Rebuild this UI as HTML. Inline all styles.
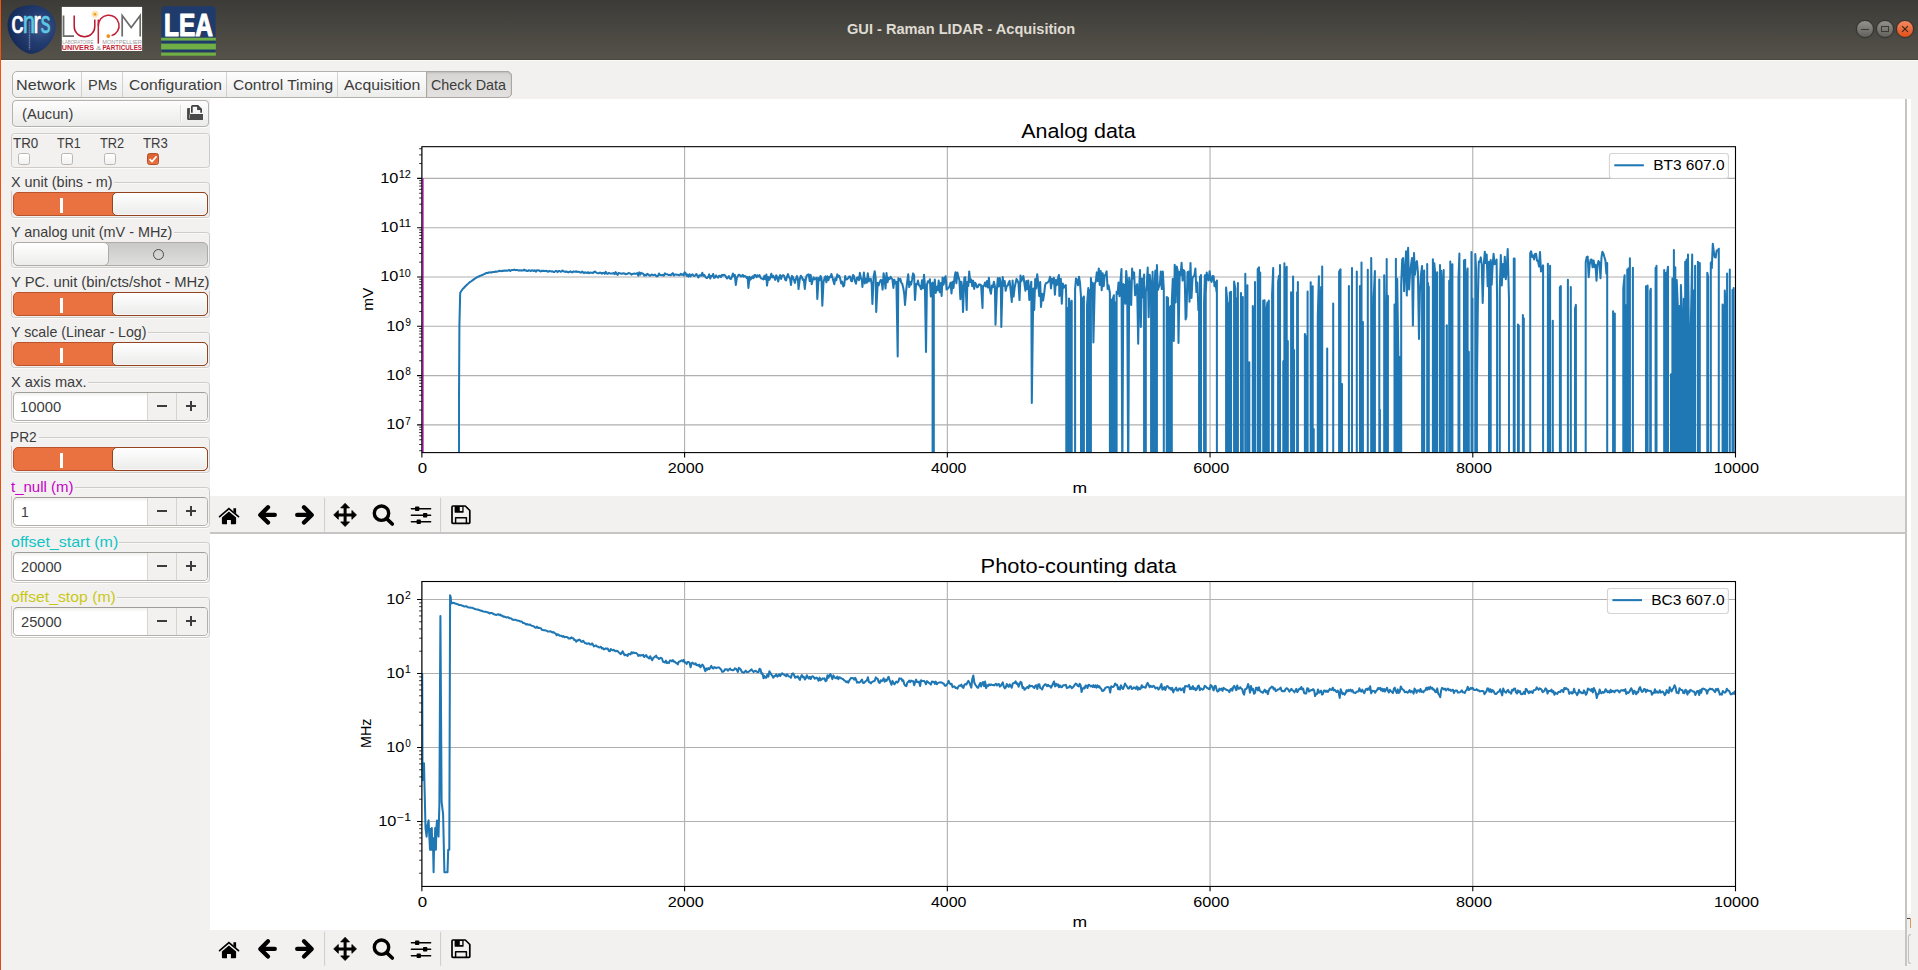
<!DOCTYPE html>
<html><head><meta charset="utf-8"><title>GUI - Raman LIDAR - Acquisition</title>
<style>

html,body{margin:0;padding:0;}
body{width:1918px;height:970px;overflow:hidden;background:#f2f1f0;font-family:"Liberation Sans",sans-serif;color:#3c3c3c;}
#win{position:relative;width:1918px;height:970px;overflow:hidden;background:#f2f1f0;}
#win div,#win span,#win svg{position:absolute;box-sizing:border-box;}
.t{white-space:nowrap;transform-origin:0 0;display:block;}
#edge{left:0;top:0;width:1px;height:970px;background:linear-gradient(#f4520c,#e04a12);}
#titlebar{left:1px;top:0;width:1917px;height:60px;background:linear-gradient(#3c3b37 0%,#55524a 100%);border-bottom:1px solid #4b483f;}
#tbhl{left:1px;top:60px;width:1917px;height:1px;background:#fbfbfa;}
.wb{width:18px;height:18px;border-radius:50%;border:1px solid #35342f;background:linear-gradient(#93928c,#62615b);top:20px;box-shadow:0 0 1px rgba(0,0,0,.35);}
.wb.close{background:linear-gradient(#f68a62,#e04e19);border-color:#3a332c;}
.wb i{position:absolute;background:#3b3a36;box-sizing:border-box;}
#tabs{left:12px;top:71px;width:500px;height:27px;border:1px solid #b5b2ad;border-radius:5px;background:linear-gradient(#fdfdfd,#ededec);box-shadow:0 1px 0 #fff;}
.tabsep{top:72px;width:1px;height:25px;background:#d3d1cd;}
#tabact{left:426px;top:71px;width:86px;height:27px;border:1px solid #aaa7a2;border-radius:0 5px 5px 0;background:linear-gradient(#d6d5d3,#e3e2e0);box-shadow:inset 0 1px 2px rgba(0,0,0,.12);}
#leftpane{left:1px;top:99px;width:209px;height:871px;background:#f2f1f0;}
.frame{left:11px;width:199px;border:1px solid #cfccc8;border-radius:3.5px;box-shadow:0 1px 0 #fbfbfa, inset 0 1px 0 rgba(255,255,255,.5);}
.lblbg{background:#f2f1f0;left:10px;height:16px;}
.sw{left:13px;width:195px;height:24px;border-radius:5px;}
.sw.on{background:#ea7240;border:1px solid #b9532d;}
.sw.on .knob{left:98px;top:-1px;width:96px;height:24px;border-radius:5px;background:linear-gradient(#ffffff,#ebebea);border:1px solid #93441f;box-shadow:inset 0 0 0 1px rgba(255,255,255,.6);}
.sw.on .bar{left:46px;top:5px;width:2.6px;height:15px;background:#fff;}
.sw.off{background:linear-gradient(#c9c9c8,#dededd);border:1px solid #aeaba6;}
.sw.off .knob{left:-1px;top:-1px;width:96px;height:24px;border-radius:5px;background:linear-gradient(#ffffff,#ececeb);border:1px solid #aeaba6;}
.sw.off .ring{left:139px;top:6px;width:11px;height:11px;border-radius:50%;border:1.3px solid #4a4a4a;}
.spin{left:13px;width:195px;height:29px;border:1px solid #b3b0ab;border-top-color:#9f9c97;border-radius:4.5px;background:linear-gradient(#f0f0ef 0,#ffffff 4px,#ffffff);box-shadow:0 1px 0 #fff;overflow:hidden;}
.spin .btns{left:133px;top:0;width:60px;height:27px;background:#f2f1f0;border-left:1px solid #d6d4d0;}
.spin .s2{left:162px;top:0;width:1px;height:27px;background:#d6d4d0;}
.spin i{position:absolute;background:#3c3c3c;}
.cb{width:12px;height:12px;top:153px;border:1px solid #bab7b2;border-radius:2.5px;background:linear-gradient(#ffffff,#f1f1f0);}
.cb.on{background:linear-gradient(#dd5e2e,#e9723f);border-color:#b5502a;}
#fcb{left:12px;top:100px;width:197px;height:27px;border:1px solid #b5b2ad;border-radius:4px;background:linear-gradient(#fdfdfd,#ebebea);box-shadow:0 1px 0 #fff;}
#rightpane{left:210px;top:99px;width:1701px;height:871px;}
.canvas{left:0;width:1695px;background:#fff;}
.tbar{left:0;width:1695px;height:36px;background:#f2f1f0;}
.vline{left:1695px;top:0;width:2px;height:867px;background:#c6c5c3;}
.hline{left:0;width:1695px;height:2px;background:#c6c5c3;}
.wstrip{left:1697px;top:0;width:4px;height:815px;background:#fff;}

</style></head>
<body>
<div id="win">
<div id="edge"></div><div id="titlebar"></div><div id="tbhl"></div>
<span class="t" style="left:846.90px;top:21.64px;font-size:14.6px;line-height:14.6px;transform:scaleX(1.0005);color:#dfdbd2;font-weight:bold;">GUI - Raman LIDAR - Acquisition</span>
<div class="wb" style="left:1856px"><i style="left:4px;top:7.5px;width:8px;height:1px"></i></div>
<div class="wb" style="left:1876px"><i style="left:4px;top:5px;width:8px;height:6px;background:none;border:1px solid #3b3a36"></i></div>
<div class="wb close" style="left:1896px"><svg style="left:0;top:0" width="16" height="16" viewBox="0 0 16 16"><path d="M5.1 5.1 L10.9 10.9 M10.9 5.1 L5.1 10.9" stroke="#3a2a1c" stroke-width="1.2" fill="none"/></svg></div>
<svg style="left:0;top:0" width="230" height="60" viewBox="0 0 230 60">
<defs>
<radialGradient id="cg" cx="0.68" cy="0.45" r="0.75"><stop offset="0" stop-color="#3d5a8c"/><stop offset="0.45" stop-color="#233c70"/><stop offset="1" stop-color="#122552"/></radialGradient>
</defs>
<path d="M31 5.2 C42 4.6 52.5 11 55.2 22 C57.2 31 53 41 45.5 47.5 C40 52.2 33 55.2 27.5 53.2 C19 50.2 11.5 42 8.6 32.5 C6 23.5 8.2 13.5 16 8.8 C20.5 6.2 25.5 5.5 31 5.2 Z" fill="url(#cg)"/>
<text stroke="#ffffff" stroke-width="0.7" transform="translate(11.27,32.80) scale(0.7985,1)" font-family="Liberation Sans, sans-serif" font-size="30.5" fill="#ffffff">c</text>
<text stroke="#5ec9e6" stroke-width="0.7" transform="translate(22.73,32.80) scale(0.7256,1)" font-family="Liberation Sans, sans-serif" font-size="30.5" fill="#5ec9e6">n</text>
<text stroke="#ffffff" stroke-width="0.7" transform="translate(33.44,32.80) scale(0.7214,1)" font-family="Liberation Sans, sans-serif" font-size="30.5" fill="#ffffff">r</text>
<text stroke="#5ec9e6" stroke-width="0.7" transform="translate(40.76,32.80) scale(0.6391,1)" font-family="Liberation Sans, sans-serif" font-size="30.5" fill="#5ec9e6">s</text>
<path d="M29.5 21.5V49.5" stroke="#c9d4e6" stroke-width="1.5" stroke-dasharray="1.2 0.5" opacity="0.45" fill="none"/>
<rect x="61.8" y="6.9" width="80.3" height="44.1" fill="#ffffff"/>
<path d="M63.5 15.4 V36.1 H74" fill="none" stroke="#6a6a6a" stroke-width="1.8"/>
<path d="M74.2 15.4 V26.5 A10.3 10.3 0 0 0 94.8 26.5 V19.5" fill="none" stroke="#b5182f" stroke-width="1.5"/>
<path d="M98.3 19.5 V43.6" fill="none" stroke="#c41f35" stroke-width="1.5"/>
<path d="M98.3 26 A10.4 10.4 0 1 1 111.5 35.6" fill="none" stroke="#c41f35" stroke-width="1.5"/>
<circle cx="108.3" cy="36.1" r="1.9" fill="#ee8d1a"/>
<path d="M122.2 36.6 V15.6 L131.2 27.5 L140.2 15.6 V36.6" fill="none" stroke="#6a6a6a" stroke-width="1.7" stroke-linejoin="miter"/>
<g stroke="#f5b53a" stroke-width="0.5"><line x1="95" y1="14.2" x2="98.80" y2="14.20"/><line x1="95" y1="14.2" x2="98.29" y2="16.10"/><line x1="95" y1="14.2" x2="96.90" y2="17.49"/><line x1="95" y1="14.2" x2="95.00" y2="18.00"/><line x1="95" y1="14.2" x2="93.10" y2="17.49"/><line x1="95" y1="14.2" x2="91.71" y2="16.10"/><line x1="95" y1="14.2" x2="91.20" y2="14.20"/><line x1="95" y1="14.2" x2="91.71" y2="12.30"/><line x1="95" y1="14.2" x2="93.10" y2="10.91"/><line x1="95" y1="14.2" x2="95.00" y2="10.40"/><line x1="95" y1="14.2" x2="96.90" y2="10.91"/><line x1="95" y1="14.2" x2="98.29" y2="12.30"/></g>
<circle cx="95" cy="14.2" r="1.3" fill="#f0a01c"/>
<text transform="translate(62.23,43.90) scale(0.9710,1)" font-family="Liberation Sans, sans-serif" font-size="4.6" fill="#9a9a9a">LABORATOIRE</text>
<text transform="translate(102.34,43.90) scale(1.2142,1)" font-family="Liberation Sans, sans-serif" font-size="4.6" fill="#9a9a9a">MONTPELLIER</text>
<text transform="translate(61.76,50.40) scale(1.1540,1)" font-family="Liberation Sans, sans-serif" font-size="6.3" font-weight="bold" fill="#c41f35">UNIVERS</text>
<text transform="translate(96.14,50.40) scale(1.2441,1)" font-family="Liberation Sans, sans-serif" font-size="6.0" fill="#8a8a8a">&amp;</text>
<text transform="translate(102.38,50.40) scale(0.9996,1)" font-family="Liberation Sans, sans-serif" font-size="6.3" font-weight="bold" fill="#c41f35">PARTICULES</text>
<path d="M165.4 6.2 H211.6 Q215.6 6.2 215.6 10.2 V50.3 Q215.6 52.3 213.6 52.3 H163.4 Q161.4 52.3 161.4 50.3 V10.2 Q161.4 6.2 165.4 6.2 Z" fill="#1f3b6c"/>
<rect x="161.1" y="37.7" width="54.8" height="2.9" fill="#70af45"/>
<rect x="161.1" y="43.6" width="54.8" height="5.9" fill="#70af45"/>
<rect x="161.1" y="52.6" width="54.8" height="3.1" fill="#70af45"/>
<text stroke="#ffffff" stroke-width="1.1" stroke-linejoin="round" transform="translate(163.97,35.50) scale(0.7987,1)" font-family="Liberation Sans, sans-serif" font-size="30.6" font-weight="bold" fill="#ffffff">LEA</text>
</svg>
<div id="tabs"></div><div id="tabact"></div>
<div class="tabsep" style="left:81px"></div>
<div class="tabsep" style="left:122px"></div>
<div class="tabsep" style="left:226px"></div>
<div class="tabsep" style="left:337px"></div>
<span class="t" style="left:16.28px;top:77.30px;font-size:15px;line-height:15px;transform:scaleX(1.0762);color:#3c3c3c;">Network</span>
<span class="t" style="left:87.51px;top:77.30px;font-size:15px;line-height:15px;transform:scaleX(0.9671);color:#3c3c3c;">PMs</span>
<span class="t" style="left:128.81px;top:77.30px;font-size:15px;line-height:15px;transform:scaleX(1.0425);color:#3c3c3c;">Configuration</span>
<span class="t" style="left:232.51px;top:77.30px;font-size:15px;line-height:15px;transform:scaleX(1.0361);color:#3c3c3c;">Control Timing</span>
<span class="t" style="left:344.17px;top:77.30px;font-size:15px;line-height:15px;transform:scaleX(1.0527);color:#3c3c3c;">Acquisition</span>
<span class="t" style="left:431.27px;top:77.30px;font-size:15px;line-height:15px;transform:scaleX(0.9561);color:#3c3c3c;">Check Data</span>
<div id="leftpane"></div>
<div id="fcb"><div style="left:167px;top:4px;width:1px;height:17px;background:#dddbd7"></div><div style="left:168px;top:4px;width:1px;height:17px;background:#fdfdfd"></div><svg style="left:173px;top:3px" width="19" height="18" viewBox="186 104 19 18"><path d="M187.1 109 Q187.1 108.1 188 108.1 H189.9 V113.2 L189 118.6 H203 V118.9 Q203 119.9 202 119.9 H188.3 Q187.1 119.9 187.1 118.7 Z" fill="#454545"/><path d="M190.1 114.1 H203 V119 Q203 119.9 202 119.9 H189.2 Z" fill="#4a4a4a"/><path d="M191.85 112.7 V106.7 Q191.85 105.9 192.65 105.9 H197.8 L201.15 109.3 V112.7" fill="none" stroke="#3f3f3f" stroke-width="1.7"/><path d="M197.95 105.9 V109.25 H201.2" fill="none" stroke="#3f3f3f" stroke-width="1.6"/><path d="M198.4 106.2 L201.2 109 H198.4 Z" fill="#4a4a4a"/></svg></div>
<span class="t" style="left:21.69px;top:105.80px;font-size:15px;line-height:15px;transform:scaleX(0.9771);color:#3c3c3c;">(Aucun)</span>
<div class="frame" style="top:133px;height:35px"></div>
<span class="t" style="left:12.90px;top:135.00px;font-size:15px;line-height:15px;transform:scaleX(0.8937);color:#3c3c3c;">TR0</span>
<div class="cb" style="left:18px"></div>
<span class="t" style="left:56.92px;top:135.00px;font-size:15px;line-height:15px;transform:scaleX(0.8325);color:#3c3c3c;">TR1</span>
<div class="cb" style="left:61px"></div>
<span class="t" style="left:99.71px;top:135.00px;font-size:15px;line-height:15px;transform:scaleX(0.8552);color:#3c3c3c;">TR2</span>
<div class="cb" style="left:104px"></div>
<span class="t" style="left:142.51px;top:135.00px;font-size:15px;line-height:15px;transform:scaleX(0.8742);color:#3c3c3c;">TR3</span>
<div class="cb on" style="left:147px"><svg style="left:0;top:0" width="10" height="10" viewBox="0 0 10 10"><path d="M1.6 5.2 L4 7.6 L8.6 2.2" fill="none" stroke="#fff" stroke-width="1.7"/></svg></div>
<div class="frame" style="top:182px;height:36px"></div>
<div class="lblbg" style="top:175px;width:104.0px"></div>
<span class="t" style="left:11.28px;top:174.30px;font-size:15px;line-height:15px;transform:scaleX(0.9600);color:#3c3c3c;">X unit (bins - m)</span>
<div class="sw on" style="top:192px"><div class="bar"></div><div class="knob"></div></div>
<div class="frame" style="top:232px;height:36px"></div>
<div class="lblbg" style="top:225px;width:163.7px"></div>
<span class="t" style="left:11.28px;top:224.30px;font-size:15px;line-height:15px;transform:scaleX(0.9596);color:#3c3c3c;">Y analog unit (mV - MHz)</span>
<div class="sw off" style="top:242px"><div class="ring"></div><div class="knob"></div></div>
<div class="frame" style="top:282px;height:36px"></div>
<div class="lblbg" style="top:275px;width:200.8px"></div>
<span class="t" style="left:11.28px;top:274.30px;font-size:15px;line-height:15px;transform:scaleX(0.9851);color:#3c3c3c;">Y PC. unit (bin/cts/shot - MHz)</span>
<div class="sw on" style="top:292px"><div class="bar"></div><div class="knob"></div></div>
<div class="frame" style="top:332px;height:36px"></div>
<div class="lblbg" style="top:325px;width:137.9px"></div>
<span class="t" style="left:11.29px;top:324.30px;font-size:15px;line-height:15px;transform:scaleX(0.9467);color:#3c3c3c;">Y scale (Linear - Log)</span>
<div class="sw on" style="top:342px"><div class="bar"></div><div class="knob"></div></div>
<div class="frame" style="top:382px;height:41px"></div>
<div class="lblbg" style="top:375px;width:77.5px"></div>
<span class="t" style="left:11.27px;top:374.30px;font-size:15px;line-height:15px;transform:scaleX(0.9748);color:#3c3c3c;">X axis max.</span>
<div class="spin" style="top:392px"><div class="btns"></div><div class="s2"></div><i style="left:143px;top:12.3px;width:10px;height:1.8px"></i><i style="left:172px;top:12.3px;width:10px;height:1.8px"></i><i style="left:176.1px;top:8px;width:1.8px;height:10.4px"></i></div><span class="t" style="left:20.47px;top:398.90px;font-size:15px;line-height:15px;transform:scaleX(0.9855);color:#3c3c3c;">10000</span>
<div class="frame" style="top:437px;height:36px"></div>
<div class="lblbg" style="top:430px;width:28.5px"></div>
<span class="t" style="left:10.47px;top:429.30px;font-size:15px;line-height:15px;transform:scaleX(0.9156);color:#3c3c3c;">PR2</span>
<div class="sw on" style="top:447px"><div class="bar"></div><div class="knob"></div></div>
<div class="frame" style="top:487px;height:41px"></div>
<div class="lblbg" style="top:480px;width:65.0px"></div>
<span class="t" style="left:11.37px;top:479.30px;font-size:15px;line-height:15px;transform:scaleX(1.0008);color:#c800c8;">t_null (m)</span>
<div class="spin" style="top:497px"><div class="btns"></div><div class="s2"></div><i style="left:143px;top:12.3px;width:10px;height:1.8px"></i><i style="left:172px;top:12.3px;width:10px;height:1.8px"></i><i style="left:176.1px;top:8px;width:1.8px;height:10.4px"></i></div><span class="t" style="left:20.54px;top:503.90px;font-size:15px;line-height:15px;transform:scaleX(0.9279);color:#3c3c3c;">1</span>
<div class="frame" style="top:542px;height:41px"></div>
<div class="lblbg" style="top:535px;width:109.2px"></div>
<span class="t" style="left:10.93px;top:534.30px;font-size:15px;line-height:15px;transform:scaleX(1.0665);color:#10c4c4;">offset_start (m)</span>
<div class="spin" style="top:552px"><div class="btns"></div><div class="s2"></div><i style="left:143px;top:12.3px;width:10px;height:1.8px"></i><i style="left:172px;top:12.3px;width:10px;height:1.8px"></i><i style="left:176.1px;top:8px;width:1.8px;height:10.4px"></i></div><span class="t" style="left:20.86px;top:558.90px;font-size:15px;line-height:15px;transform:scaleX(0.9761);color:#3c3c3c;">20000</span>
<div class="frame" style="top:597px;height:41px"></div>
<div class="lblbg" style="top:590px;width:106.7px"></div>
<span class="t" style="left:10.94px;top:589.30px;font-size:15px;line-height:15px;transform:scaleX(1.0500);color:#c9c816;">offset_stop (m)</span>
<div class="spin" style="top:607px"><div class="btns"></div><div class="s2"></div><i style="left:143px;top:12.3px;width:10px;height:1.8px"></i><i style="left:172px;top:12.3px;width:10px;height:1.8px"></i><i style="left:176.1px;top:8px;width:1.8px;height:10.4px"></i></div><span class="t" style="left:20.86px;top:613.90px;font-size:15px;line-height:15px;transform:scaleX(0.9761);color:#3c3c3c;">25000</span>
<div id="rightpane">
<div class="wstrip"></div>
<div class="canvas" style="top:0;height:397.3px"></div>
<svg style="left:0;top:0px" width="1695" height="397.3" viewBox="210 99 1695 397.3" font-family="Liberation Sans, sans-serif">
<defs><clipPath id="clip99"><rect x="421.875" y="146.68" width="1313.625" height="305.92"/></clipPath></defs>
<path d="M421.88 146.68V452.60M684.60 146.68V452.60M947.33 146.68V452.60M1210.05 146.68V452.60M1472.78 146.68V452.60M1735.50 146.68V452.60M421.875 424.90H1735.5M421.875 375.60H1735.5M421.875 326.30H1735.5M421.875 277.00H1735.5M421.875 227.70H1735.5M421.875 178.40H1735.5" stroke="#b0b0b0" stroke-width="1.09" fill="none"/>
<g clip-path="url(#clip99)"><path d="M459.0 482.3L459.0 400.0L459.4 325.0L460.2 292.7L461.0 291.5L462.0 290.0L463.0 288.7L464.0 287.7L464.9 286.7L465.9 285.7L466.9 284.8L467.9 283.9L468.9 282.9L469.9 282.2L470.9 281.5L471.8 280.8L472.8 280.1L473.8 279.4L474.8 278.7L475.8 278.1L476.8 277.4L477.7 276.9L478.7 276.5L479.7 276.0L480.7 275.6L481.7 275.2L482.7 274.8L483.7 274.3L484.6 274.1L485.6 273.2L486.6 272.9L487.6 273.0L488.6 272.5L489.6 272.6L490.6 272.3L491.5 272.5L492.5 272.1L493.5 271.9L494.5 272.1L495.5 271.5L496.5 271.8L497.4 271.5L498.4 271.2L499.4 270.8L500.4 271.0L501.4 271.2L502.4 270.7L503.4 270.9L504.3 270.5L505.3 270.7L506.3 270.4L507.3 270.8L508.3 270.3L509.3 270.0L510.3 271.0L511.2 270.3L512.2 270.0L513.2 270.1L514.2 269.6L515.2 270.2L516.2 270.1L517.1 270.0L518.1 270.4L519.1 270.3L520.1 270.4L521.1 270.2L522.1 270.4L523.1 270.5L524.0 269.6L525.0 270.5L526.0 270.3L527.0 271.1L528.0 270.9L529.0 270.2L530.0 270.6L530.9 271.1L531.9 270.2L532.9 270.5L533.9 271.0L534.9 270.3L535.9 271.7L536.8 270.3L537.8 270.6L538.8 270.2L539.8 271.1L540.8 271.4L541.8 270.7L542.8 270.9L543.7 270.7L544.7 271.1L545.7 270.9L546.7 270.8L547.7 271.7L548.7 271.3L549.7 271.1L550.6 271.2L551.6 271.5L552.6 271.3L553.6 272.0L554.6 271.9L555.6 270.9L556.5 271.1L557.5 272.1L558.5 271.0L559.5 271.0L560.5 271.7L561.5 271.5L562.5 270.6L563.4 271.2L564.4 271.6L565.4 271.9L566.4 271.5L567.4 272.0L568.4 272.4L569.4 271.8L570.3 271.3L571.3 272.0L572.3 272.4L573.3 271.4L574.3 271.7L575.3 271.7L576.2 271.3L577.2 272.0L578.2 271.8L579.2 271.7L580.2 272.5L581.2 272.4L582.2 271.5L583.1 272.5L584.1 273.1L585.1 272.2L586.1 272.8L587.1 272.9L588.1 272.2L589.1 273.2L590.0 272.5L591.0 272.7L592.0 272.7L593.0 273.2L594.0 271.9L595.0 271.6L595.9 272.4L596.9 272.9L597.9 273.3L598.9 273.2L599.9 272.6L600.9 272.9L601.9 273.6L602.8 272.9L603.8 272.8L604.8 273.8L605.8 271.8L606.8 273.5L607.8 273.9L608.8 272.9L609.7 273.2L610.7 273.5L611.7 273.5L612.7 273.6L613.7 273.0L614.7 274.2L615.6 272.1L616.6 273.6L617.6 274.9L618.6 272.9L619.6 273.2L620.6 273.5L621.6 273.8L622.5 273.5L623.5 273.3L624.5 273.4L625.5 274.2L626.5 273.9L627.5 273.7L628.5 273.1L629.4 273.2L630.4 273.7L631.4 274.6L632.4 274.0L633.4 273.8L634.4 273.6L635.3 273.8L636.3 273.8L637.3 273.1L638.3 275.7L639.3 272.4L640.3 274.6L641.3 272.7L642.2 273.4L643.2 273.8L644.2 275.6L645.2 274.8L646.2 275.4L647.2 273.9L648.2 274.4L649.1 275.1L650.1 275.8L651.1 274.9L652.1 274.5L653.1 275.2L654.1 274.9L655.0 274.6L656.0 275.8L657.0 276.5L658.0 275.9L659.0 273.5L660.0 275.0L661.0 275.1L661.9 275.2L662.9 274.9L663.9 275.7L664.9 273.4L665.9 274.2L666.9 274.2L667.9 274.7L668.8 275.0L669.8 274.7L670.8 275.3L671.8 274.1L672.8 273.2L673.8 275.5L674.7 274.6L675.7 274.4L676.7 274.7L677.7 274.7L678.7 275.2L679.7 275.2L680.7 273.8L681.6 274.8L682.6 274.3L683.6 275.4L684.6 272.3L685.6 273.2L686.6 275.8L687.6 274.5L688.5 276.6L689.5 274.3L690.5 276.4L691.5 274.8L692.5 274.3L693.5 275.7L694.4 276.0L695.4 275.2L696.4 274.0L697.4 275.7L698.4 277.5L699.4 275.3L700.4 275.3L701.3 275.7L702.3 272.8L703.3 275.9L704.3 274.9L705.3 276.8L706.3 277.9L707.3 277.9L708.2 276.9L709.2 274.4L710.2 278.5L711.2 276.0L712.2 276.1L713.2 274.0L714.1 277.9L715.1 277.3L716.1 275.4L717.1 277.0L718.1 277.7L719.1 275.7L720.1 275.8L721.0 277.1L722.0 274.9L723.0 275.5L724.0 274.7L725.0 275.3L726.0 276.9L727.0 278.5L727.9 277.5L728.9 276.0L729.9 278.6L730.9 279.0L731.9 276.9L732.9 273.5L733.8 276.1L734.8 274.9L735.8 285.0L736.8 278.0L737.8 276.0L738.8 274.7L739.8 275.2L740.7 276.4L741.7 276.2L742.7 274.8L743.7 276.7L744.7 276.0L745.7 276.4L746.7 277.9L747.6 277.0L748.4 288.0L749.6 276.8L750.6 279.6L751.6 277.9L752.6 276.4L753.5 278.3L754.5 275.1L755.5 275.0L756.5 277.2L757.5 275.4L758.5 276.3L759.5 275.0L760.4 277.5L761.4 278.6L762.4 278.7L763.4 279.4L764.4 275.8L765.4 279.3L766.4 274.6L767.0 285.6L768.3 276.9L769.3 279.9L770.3 277.5L771.3 273.8L772.3 277.4L773.2 275.7L774.2 277.4L775.2 279.9L776.2 275.3L777.2 277.3L778.2 281.4L779.2 277.1L780.1 275.1L781.1 278.9L782.1 275.8L783.1 275.2L784.1 275.8L785.1 279.6L786.1 280.3L787.0 276.7L788.0 274.1L789.0 277.2L790.0 278.6L791.0 285.0L792.0 275.9L792.9 277.1L793.9 279.8L794.9 282.9L795.9 279.1L796.9 276.0L797.9 279.0L798.5 289.0L799.8 279.1L800.8 275.7L801.8 277.0L802.8 280.0L803.8 279.4L804.8 289.0L805.8 279.2L806.7 275.5L807.7 274.8L808.7 274.4L809.7 281.0L810.7 274.9L811.7 284.2L812.6 280.5L813.6 277.4L814.6 279.4L815.6 278.3L816.6 277.8L817.3 299.0L818.6 277.9L819.5 280.3L820.5 276.0L821.5 278.4L822.3 305.7L823.5 282.0L824.5 278.3L825.5 276.3L826.4 282.3L827.4 276.3L828.4 280.2L829.4 276.7L830.4 277.2L831.4 274.0L832.3 277.0L833.3 280.7L834.3 284.3L835.3 278.2L836.3 280.3L837.3 274.4L838.3 276.7L839.2 275.8L840.2 278.7L841.2 283.5L842.2 281.6L843.2 286.4L844.2 285.5L845.2 276.0L846.1 279.4L847.1 279.2L848.1 278.3L849.1 276.4L850.1 276.5L851.1 280.8L852.0 281.3L853.0 275.0L854.0 276.1L855.0 281.4L856.0 283.7L857.0 277.7L858.0 277.4L858.9 280.3L859.9 272.9L860.9 278.4L861.9 280.0L862.4 287.0L863.9 272.6L864.9 283.4L865.8 278.8L866.8 282.8L867.8 273.3L868.8 281.4L869.8 279.0L870.8 278.9L871.7 284.3L872.4 304.0L873.7 276.3L874.7 271.2L875.7 278.4L876.2 312.0L877.7 282.7L878.6 285.5L879.6 282.4L880.6 280.1L881.6 280.3L882.6 289.6L883.6 273.3L884.6 279.2L885.5 288.4L886.5 273.1L887.5 282.3L888.5 277.9L889.5 279.1L890.5 276.8L891.4 278.1L892.4 279.4L893.4 288.0L894.4 279.7L895.4 283.4L896.4 281.8L897.7 356.5L898.3 278.2L899.3 280.5L900.3 278.8L901.3 282.7L902.3 283.9L903.3 288.2L904.3 294.5L905.0 305.0L906.2 290.1L907.2 281.6L908.2 274.3L909.2 287.1L910.2 282.0L911.1 284.6L912.1 279.4L913.1 273.4L914.1 275.3L915.0 300.0L916.1 283.9L917.1 284.4L918.0 280.6L919.0 285.4L920.0 286.1L921.0 289.3L922.0 280.2L923.0 288.3L924.0 274.7L924.9 284.7L926.0 352.0L926.9 285.0L927.9 281.2L928.9 282.3L929.9 279.3L930.8 296.5L931.8 283.7L932.6 282.7L932.6 482.3L933.8 482.3L933.8 292.9L934.8 279.6L935.8 292.9L936.7 286.8L937.7 290.3L938.7 280.6L939.7 292.2L940.7 283.1L941.6 296.0L942.6 277.5L943.6 284.7L944.6 278.5L945.6 276.2L946.6 289.6L947.6 288.7L948.6 287.9L949.5 286.1L950.5 282.7L951.5 293.4L952.5 281.7L953.5 288.0L954.5 277.7L955.5 272.3L956.4 283.2L957.4 272.6L958.4 276.9L959.4 280.1L960.4 299.2L961.4 281.7L962.3 287.8L963.0 312.0L964.3 277.7L965.3 277.3L966.7 310.0L967.3 281.9L968.3 286.1L969.2 271.4L970.2 281.9L971.2 279.4L972.2 286.2L973.2 280.8L974.2 288.9L975.2 282.8L976.1 284.3L977.1 287.4L978.1 286.6L979.1 284.4L980.1 284.6L981.1 285.4L982.5 308.0L983.0 286.1L984.0 286.0L985.0 282.6L986.0 286.6L987.0 281.0L988.0 287.5L988.9 277.7L989.9 289.5L990.9 293.8L991.9 285.6L992.9 287.1L993.9 281.7L994.9 286.3L995.5 324.7L996.8 290.6L997.8 278.1L998.8 286.6L999.8 278.1L1000.8 283.1L1001.3 327.0L1002.7 277.1L1003.7 285.8L1004.7 281.0L1005.7 290.8L1006.7 286.1L1007.7 285.6L1008.6 282.8L1009.6 280.9L1010.6 289.7L1011.8 302.0L1012.6 280.5L1013.6 296.6L1014.6 287.9L1015.5 283.5L1016.5 278.9L1017.5 280.6L1018.5 283.4L1019.5 300.1L1020.5 275.4L1021.4 281.3L1022.4 278.0L1023.4 276.1L1024.4 283.3L1025.4 290.7L1026.4 281.1L1027.4 289.1L1028.3 280.6L1029.3 300.0L1030.3 288.4L1031.3 281.7L1031.8 403.0L1033.3 288.6L1034.2 310.0L1035.2 279.0L1036.2 288.5L1037.2 274.2L1038.2 283.3L1039.2 296.0L1040.2 282.1L1041.0 307.0L1042.1 293.7L1043.1 300.5L1044.1 294.2L1045.1 285.2L1046.1 282.9L1047.1 282.8L1048.0 282.2L1049.0 280.9L1050.0 276.8L1051.0 288.3L1052.0 278.7L1053.0 283.3L1053.9 277.9L1054.9 294.8L1055.9 280.0L1056.9 285.1L1057.9 278.6L1058.9 275.1L1059.4 296.0L1060.8 278.8L1061.8 303.7L1062.8 283.5L1063.8 287.7L1064.8 285.9L1065.8 285.2L1066.3 299.1L1066.3 482.3L1067.7 482.3L1067.7 307.9L1067.7 482.3L1069.0 482.3L1069.0 298.5L1070.3 306.6L1070.3 482.3L1071.7 482.3L1071.7 300.7L1071.7 482.3L1075.1 482.3L1075.1 289.4L1076.0 278.4L1077.0 280.3L1078.0 285.3L1079.0 276.7L1080.0 282.6L1081.0 297.0L1081.0 482.3L1082.5 482.3L1082.5 299.0L1083.9 296.5L1083.9 482.3L1087.0 482.3L1087.0 305.8L1088.3 288.1L1088.3 482.3L1089.6 482.3L1089.6 289.9L1089.6 482.3L1090.9 482.3L1090.9 278.1L1091.9 291.4L1092.8 282.9L1093.4 342.6L1094.8 283.9L1095.8 281.5L1096.8 272.4L1097.8 281.0L1098.8 268.4L1099.7 284.9L1100.7 271.0L1101.7 290.3L1102.7 273.3L1103.7 286.2L1104.7 275.5L1105.7 274.5L1106.6 271.4L1107.6 288.9L1108.6 285.4L1109.9 293.0L1109.9 482.3L1111.3 482.3L1111.3 299.8L1111.3 482.3L1112.6 482.3L1112.6 299.3L1113.9 295.3L1113.9 482.3L1115.2 482.3L1115.2 302.6L1115.2 482.3L1116.6 482.3L1116.6 291.7L1117.6 293.9L1118.5 282.5L1119.5 296.2L1120.5 280.7L1121.5 268.9L1122.3 482.3L1123.3 284.1L1124.3 285.1L1125.3 303.7L1126.2 270.9L1127.2 282.1L1128.2 482.3L1129.2 277.8L1130.2 284.3L1131.2 305.0L1132.1 268.5L1133.1 278.5L1134.1 272.4L1135.1 295.3L1136.1 288.1L1137.1 284.3L1138.2 343.8L1139.0 291.2L1140.0 270.1L1140.8 327.0L1142.0 278.4L1143.0 297.2L1144.1 274.6L1144.1 482.3L1144.9 482.3L1144.9 308.4L1144.9 482.3L1145.8 482.3L1145.8 292.2L1146.8 284.9L1147.7 267.5L1148.7 317.3L1149.7 274.7L1151.1 284.8L1151.1 482.3L1152.6 482.3L1152.6 271.8L1152.6 482.3L1154.0 482.3L1154.0 292.2L1155.4 270.4L1155.4 482.3L1156.9 482.3L1156.9 265.1L1157.9 289.9L1158.8 287.0L1159.8 284.6L1160.8 271.4L1161.8 289.1L1162.8 271.6L1163.8 289.2L1163.8 482.3L1166.7 482.3L1166.7 296.9L1168.0 298.1L1168.0 482.3L1169.2 482.3L1169.2 308.6L1170.5 306.1L1170.5 482.3L1171.8 482.3L1171.8 301.0L1172.8 278.9L1173.8 341.0L1174.7 264.7L1175.7 302.4L1176.7 266.6L1177.7 270.5L1178.5 343.0L1179.7 271.8L1180.6 275.0L1181.6 262.7L1182.6 280.6L1183.6 270.0L1184.6 271.5L1185.6 319.4L1186.4 317.0L1187.5 272.3L1188.5 271.5L1189.5 301.8L1190.5 263.0L1191.5 298.0L1192.5 277.9L1193.4 276.5L1194.4 275.5L1195.4 268.5L1196.4 292.1L1197.4 282.6L1198.4 310.2L1199.1 297.4L1199.1 482.3L1200.0 482.3L1200.0 276.6L1200.0 482.3L1201.0 482.3L1201.0 275.0L1201.0 482.3L1204.1 482.3L1204.1 302.5L1204.9 275.3L1204.9 482.3L1205.7 482.3L1205.7 293.9L1206.7 272.5L1207.6 278.4L1208.6 280.4L1209.6 271.2L1210.6 279.6L1211.6 281.9L1212.6 276.0L1213.6 276.3L1214.5 286.2L1215.5 282.2L1216.5 291.3L1216.9 280.5L1216.9 482.3L1226.1 482.3L1226.1 287.5L1227.3 301.4L1227.3 482.3L1228.5 482.3L1228.5 303.5L1228.5 482.3L1229.8 482.3L1229.8 292.5L1229.8 482.3L1231.0 482.3L1231.0 291.8L1231.0 482.3L1234.1 482.3L1234.1 281.6L1235.4 288.9L1235.4 482.3L1236.6 482.3L1236.6 298.6L1236.6 482.3L1237.9 482.3L1237.9 282.9L1237.9 482.3L1241.0 482.3L1241.0 293.0L1241.0 482.3L1241.9 482.3L1241.9 300.6L1241.9 482.3L1242.8 482.3L1242.8 296.9L1242.8 482.3L1245.3 482.3L1245.3 273.8L1245.3 482.3L1247.4 482.3L1247.4 285.2L1247.4 482.3L1249.3 482.3L1249.3 362.2L1249.3 482.3L1252.8 482.3L1252.8 306.0L1253.9 318.3L1253.9 482.3L1255.0 482.3L1255.0 282.0L1255.0 482.3L1257.7 482.3L1257.7 269.3L1259.0 267.4L1259.0 482.3L1260.2 482.3L1260.2 272.6L1260.2 482.3L1263.2 482.3L1263.2 300.5L1263.2 482.3L1264.6 482.3L1264.6 300.2L1264.6 482.3L1266.0 482.3L1266.0 312.7L1267.4 302.6L1267.4 482.3L1268.8 482.3L1268.8 300.5L1268.8 482.3L1272.1 482.3L1272.1 294.3L1273.2 267.9L1273.2 482.3L1278.1 482.3L1278.1 282.0L1279.0 275.9L1279.0 482.3L1280.0 482.3L1280.0 265.1L1280.0 482.3L1283.3 482.3L1283.3 361.2L1283.3 482.3L1284.4 482.3L1284.4 263.2L1284.4 482.3L1285.5 482.3L1285.5 271.6L1286.7 266.7L1286.7 482.3L1287.8 482.3L1287.8 341.0L1287.8 482.3L1291.1 482.3L1291.1 292.2L1291.1 482.3L1292.1 482.3L1292.1 318.5L1292.1 482.3L1293.1 482.3L1293.1 276.6L1293.1 482.3L1294.1 482.3L1294.1 350.1L1294.1 482.3L1297.1 482.3L1297.1 292.2L1297.1 482.3L1297.9 482.3L1297.9 281.9L1297.9 482.3L1304.9 482.3L1304.9 334.1L1306.2 338.6L1306.2 482.3L1307.6 482.3L1307.6 291.6L1307.6 482.3L1310.7 482.3L1310.7 282.3L1310.7 482.3L1311.7 482.3L1311.7 378.2L1311.7 482.3L1312.7 482.3L1312.7 286.3L1312.7 482.3L1313.7 482.3L1313.7 429.0L1313.7 482.3L1317.8 482.3L1317.8 317.1L1318.9 276.2L1318.9 482.3L1320.0 482.3L1320.0 291.8L1320.0 482.3L1321.1 482.3L1321.1 286.9L1321.1 482.3L1322.2 482.3L1322.2 266.6L1322.2 482.3L1327.2 482.3L1327.2 348.6L1327.2 482.3L1333.2 482.3L1333.2 303.4L1333.2 482.3L1339.1 482.3L1339.1 271.8L1340.5 269.3L1340.5 482.3L1342.0 482.3L1342.0 384.0L1342.0 482.3L1348.9 482.3L1348.9 286.1L1348.9 482.3L1352.0 482.3L1352.0 267.9L1352.0 482.3L1356.8 482.3L1356.8 271.5L1356.8 482.3L1360.0 482.3L1360.0 286.0L1360.0 482.3L1361.5 482.3L1361.5 262.5L1361.5 482.3L1362.9 482.3L1362.9 322.0L1362.9 482.3L1367.8 482.3L1367.8 269.8L1367.8 482.3L1371.2 482.3L1371.2 257.9L1372.4 387.2L1372.4 482.3L1373.7 482.3L1373.7 297.1L1374.9 271.1L1374.9 482.3L1379.3 482.3L1379.3 279.5L1379.3 482.3L1379.9 482.3L1379.9 409.7L1379.9 482.3L1384.2 482.3L1384.2 275.3L1385.4 347.7L1385.4 482.3L1386.7 482.3L1386.7 259.1L1386.7 482.3L1387.9 482.3L1387.9 295.7L1387.9 482.3L1394.5 482.3L1394.5 304.5L1394.5 482.3L1395.9 482.3L1395.9 258.7L1395.9 482.3L1397.2 482.3L1397.2 278.7L1398.5 367.9L1398.5 482.3L1399.8 482.3L1399.8 356.9L1399.8 482.3L1401.2 482.3L1401.2 284.2L1402.2 259.5L1403.1 258.1L1404.1 291.2L1405.1 269.2L1406.1 251.2L1406.8 295.6L1408.1 247.7L1409.1 289.4L1410.0 273.8L1411.0 265.3L1412.0 258.1L1412.9 325.5L1414.0 253.0L1415.0 274.7L1416.0 263.5L1416.9 261.1L1417.9 272.1L1419.0 339.0L1419.9 291.2L1420.9 275.3L1422.1 266.0L1422.1 482.3L1423.1 482.3L1423.1 293.4L1424.2 270.5L1424.2 482.3L1427.2 482.3L1427.2 264.0L1427.2 482.3L1428.0 482.3L1428.0 283.1L1428.0 482.3L1428.8 482.3L1428.8 286.6L1428.8 482.3L1432.9 482.3L1432.9 259.3L1432.9 482.3L1434.3 482.3L1434.3 263.2L1435.8 281.1L1435.8 482.3L1437.2 482.3L1437.2 272.2L1437.2 482.3L1440.0 482.3L1440.0 265.0L1440.0 482.3L1441.2 482.3L1441.2 270.8L1441.2 482.3L1442.5 482.3L1442.5 288.4L1443.7 270.0L1443.7 482.3L1446.8 482.3L1446.8 325.2L1446.8 482.3L1449.2 482.3L1449.2 280.8L1449.2 482.3L1450.3 482.3L1450.3 261.4L1450.3 482.3L1451.3 482.3L1451.3 270.0L1452.4 264.2L1452.4 482.3L1458.5 482.3L1458.5 278.8L1459.4 253.5L1459.4 482.3L1464.0 482.3L1464.0 260.4L1465.2 259.8L1465.2 482.3L1466.4 482.3L1466.4 281.3L1467.6 268.4L1467.6 482.3L1468.8 482.3L1468.8 351.7L1468.8 482.3L1471.5 482.3L1471.5 252.0L1471.5 482.3L1472.4 482.3L1472.4 298.6L1472.4 482.3L1475.3 482.3L1475.3 254.0L1476.1 269.2L1476.1 482.3L1476.9 482.3L1476.9 387.2L1477.9 299.9L1478.8 261.6L1479.8 261.9L1480.8 257.4L1481.8 265.1L1482.7 303.0L1483.8 264.9L1484.8 251.7L1485.7 263.1L1486.7 254.5L1487.7 286.3L1489.0 261.7L1489.0 482.3L1489.8 482.3L1489.8 270.8L1489.8 482.3L1490.7 482.3L1490.7 259.9L1491.7 284.8L1492.6 265.4L1493.6 253.8L1494.6 264.3L1495.6 263.4L1496.6 259.6L1497.1 301.2L1497.1 482.3L1499.8 482.3L1499.8 288.6L1500.8 255.0L1501.8 285.5L1502.8 263.9L1503.8 276.9L1504.8 256.7L1505.8 279.2L1506.7 270.6L1507.7 249.1L1509.0 299.5L1509.0 482.3L1513.8 482.3L1513.8 258.6L1513.8 482.3L1514.6 482.3L1514.6 258.5L1514.6 482.3L1518.0 482.3L1518.0 324.5L1518.0 482.3L1518.8 482.3L1518.8 325.6L1518.8 482.3L1522.9 482.3L1522.9 315.1L1522.9 482.3L1523.8 482.3L1523.8 318.2L1523.8 482.3L1530.2 482.3L1530.2 253.2L1531.1 251.3L1532.1 256.9L1533.1 255.4L1534.1 259.4L1535.1 254.0L1536.1 253.7L1537.0 260.7L1538.0 260.7L1539.0 266.4L1540.0 251.9L1541.0 271.5L1542.0 268.5L1543.1 265.4L1543.1 482.3L1547.9 482.3L1547.9 263.7L1547.9 482.3L1549.0 482.3L1549.0 276.7L1549.0 482.3L1550.1 482.3L1550.1 265.7L1550.1 482.3L1552.8 482.3L1552.8 320.7L1552.8 482.3L1559.9 482.3L1559.9 287.4L1560.8 286.1L1560.8 482.3L1567.9 482.3L1567.9 279.7L1567.9 482.3L1570.8 482.3L1570.8 286.9L1570.8 482.3L1575.0 482.3L1575.0 309.0L1575.9 304.9L1575.9 482.3L1585.7 482.3L1585.7 262.3L1586.7 257.2L1587.7 256.5L1588.7 277.3L1589.6 265.1L1590.6 259.7L1591.6 259.6L1592.6 267.3L1593.6 260.5L1594.6 267.2L1595.5 264.7L1596.5 280.7L1597.5 265.3L1598.5 261.1L1599.5 263.0L1600.5 278.2L1601.5 257.3L1602.4 251.8L1603.4 253.5L1604.4 257.1L1605.4 260.4L1606.4 273.6L1607.2 263.1L1607.2 482.3L1613.1 482.3L1613.1 311.2L1613.1 482.3L1613.9 482.3L1613.9 323.7L1613.9 482.3L1614.8 482.3L1614.8 313.4L1614.8 482.3L1623.3 482.3L1623.3 288.5L1624.6 275.3L1624.6 482.3L1625.9 482.3L1625.9 305.2L1625.9 482.3L1627.3 482.3L1627.3 269.4L1627.3 482.3L1628.6 482.3L1628.6 268.3L1628.6 482.3L1629.9 482.3L1629.9 258.3L1629.9 482.3L1632.9 482.3L1632.9 267.7L1632.9 482.3L1646.0 482.3L1646.0 286.2L1646.8 293.1L1646.8 482.3L1647.6 482.3L1647.6 285.6L1647.6 482.3L1650.2 482.3L1650.2 291.2L1650.8 288.8L1650.8 482.3L1655.6 482.3L1655.6 267.7L1655.6 482.3L1656.5 482.3L1656.5 265.7L1656.5 482.3L1664.2 482.3L1664.2 270.0L1664.2 482.3L1665.5 482.3L1665.5 272.9L1665.5 482.3L1666.7 482.3L1666.7 275.1L1668.0 266.7L1668.0 482.3L1671.0 482.3L1671.0 374.3L1671.0 482.3L1672.4 482.3L1672.4 278.5L1672.4 482.3L1673.9 482.3L1673.9 249.9L1673.9 482.3L1675.3 482.3L1675.3 267.3L1675.3 482.3L1676.7 482.3L1676.7 279.9L1678.1 312.8L1678.1 482.3L1679.5 482.3L1679.5 306.1L1679.5 482.3L1680.9 482.3L1680.9 285.1L1682.3 324.8L1682.3 482.3L1683.8 482.3L1683.8 298.8L1683.8 482.3L1685.2 482.3L1685.2 261.7L1685.2 482.3L1686.6 482.3L1686.6 259.4L1686.6 482.3L1688.0 482.3L1688.0 254.5L1689.4 379.3L1689.4 482.3L1690.8 482.3L1690.8 327.4L1692.2 254.4L1692.2 482.3L1693.7 482.3L1693.7 290.4L1693.7 482.3L1695.1 482.3L1695.1 265.8L1695.1 482.3L1697.9 482.3L1697.9 261.8L1697.9 482.3L1698.8 482.3L1698.8 275.8L1698.8 482.3L1699.8 482.3L1699.8 262.9L1699.8 482.3L1707.3 482.3L1707.3 272.8L1708.1 276.8L1708.1 482.3L1710.8 482.3L1710.8 262.6L1711.8 268.1L1712.8 243.7L1713.8 251.6L1714.7 257.0L1715.7 257.5L1716.7 250.5L1717.7 250.5L1718.8 248.7L1718.8 482.3L1722.6 482.3L1722.6 304.5L1723.7 310.8L1723.7 482.3L1724.8 482.3L1724.8 290.6L1726.0 318.3L1726.0 482.3L1727.1 482.3L1727.1 273.5L1727.1 482.3L1729.8 482.3L1729.8 269.5L1729.8 482.3L1732.5 482.3L1732.5 290.1L1732.5 482.3L1733.7 482.3L1733.7 287.9L1733.7 482.3" fill="none" stroke="#1f77b4" stroke-width="2.04" stroke-linejoin="round" stroke-linecap="butt"/></g>
<path d="M421.88 452.60v4.8M684.60 452.60v4.8M947.33 452.60v4.8M1210.05 452.60v4.8M1472.78 452.60v4.8M1735.50 452.60v4.8M421.875 424.90h-4.8M421.875 375.60h-4.8M421.875 326.30h-4.8M421.875 277.00h-4.8M421.875 227.70h-4.8M421.875 178.40h-4.8" stroke="#000" stroke-width="1.09" fill="none"/>
<path d="M421.875 450.68h-2.7M421.875 444.52h-2.7M421.875 439.74h-2.7M421.875 435.84h-2.7M421.875 432.54h-2.7M421.875 429.68h-2.7M421.875 427.16h-2.7M421.875 410.06h-2.7M421.875 401.38h-2.7M421.875 395.22h-2.7M421.875 390.44h-2.7M421.875 386.54h-2.7M421.875 383.24h-2.7M421.875 380.38h-2.7M421.875 377.86h-2.7M421.875 360.76h-2.7M421.875 352.08h-2.7M421.875 345.92h-2.7M421.875 341.14h-2.7M421.875 337.24h-2.7M421.875 333.94h-2.7M421.875 331.08h-2.7M421.875 328.56h-2.7M421.875 311.46h-2.7M421.875 302.78h-2.7M421.875 296.62h-2.7M421.875 291.84h-2.7M421.875 287.94h-2.7M421.875 284.64h-2.7M421.875 281.78h-2.7M421.875 279.26h-2.7M421.875 262.16h-2.7M421.875 253.48h-2.7M421.875 247.32h-2.7M421.875 242.54h-2.7M421.875 238.64h-2.7M421.875 235.34h-2.7M421.875 232.48h-2.7M421.875 229.96h-2.7M421.875 212.86h-2.7M421.875 204.18h-2.7M421.875 198.02h-2.7M421.875 193.24h-2.7M421.875 189.34h-2.7M421.875 186.04h-2.7M421.875 183.18h-2.7M421.875 180.66h-2.7M421.875 163.56h-2.7M421.875 154.88h-2.7M421.875 148.72h-2.7" stroke="#000" stroke-width="0.82" fill="none"/>
<path d="M422.95 178.4V452.3" stroke="#bf00bf" stroke-width="1.3" fill="none"/>
<rect x="421.875" y="146.68" width="1313.625" height="305.92" fill="none" stroke="#000" stroke-width="1.09"/>
<text transform="translate(417.68,473.30) scale(1.1728,1)" font-size="14.4" fill="#000">0</text>
<text transform="translate(667.74,473.30) scale(1.1250,1)" font-size="14.4" fill="#000">2000</text>
<text transform="translate(930.91,473.30) scale(1.1108,1)" font-size="14.4" fill="#000">4000</text>
<text transform="translate(1193.18,473.30) scale(1.1253,1)" font-size="14.4" fill="#000">6000</text>
<text transform="translate(1456.03,473.30) scale(1.1214,1)" font-size="14.4" fill="#000">8000</text>
<text transform="translate(1713.88,473.30) scale(1.1271,1)" font-size="14.4" fill="#000">10000</text>
<text transform="translate(405.09,424.60) scale(1.0390,1)" font-size="10.1" fill="#000">7</text>
<text transform="translate(386.28,429.40) scale(1.1354,1)" font-size="14.4" fill="#000">10</text>
<text transform="translate(405.19,375.30) scale(1.0065,1)" font-size="10.1" fill="#000">8</text>
<text transform="translate(386.28,380.10) scale(1.1354,1)" font-size="14.4" fill="#000">10</text>
<text transform="translate(405.15,326.00) scale(1.0225,1)" font-size="10.1" fill="#000">9</text>
<text transform="translate(386.28,330.80) scale(1.1354,1)" font-size="14.4" fill="#000">10</text>
<text transform="translate(398.73,276.70) scale(1.0765,1)" font-size="10.1" fill="#000">10</text>
<text transform="translate(380.22,281.50) scale(1.1354,1)" font-size="14.4" fill="#000">10</text>
<text transform="translate(398.66,227.40) scale(1.1755,1)" font-size="10.1" fill="#000">11</text>
<text transform="translate(380.22,232.20) scale(1.1354,1)" font-size="14.4" fill="#000">10</text>
<text transform="translate(398.72,178.10) scale(1.0887,1)" font-size="10.1" fill="#000">12</text>
<text transform="translate(380.22,182.90) scale(1.1354,1)" font-size="14.4" fill="#000">10</text>
<text transform="translate(1072.52,493.30) scale(1.2191,1)" font-size="14.4" fill="#000">m</text>
<text transform="translate(372.9,310.83) rotate(-90) scale(1.0738,1)" font-size="14.4" fill="#000">mV</text>
<text transform="translate(1021.26,137.98) scale(1.0677,1)" font-size="20.1" fill="#000">Analog data</text>
<rect x="1609.4" y="153.58" width="119.00" height="25.00" rx="2.6" fill="#fff" fill-opacity="0.8" stroke="#cccccc" stroke-opacity="0.85" stroke-width="1.09"/>
<path d="M1614.30 165.28h29.6" stroke="#1f77b4" stroke-width="2.04" fill="none"/>
<text transform="translate(1653.13,169.98) scale(1.0758,1)" font-size="14.4" fill="#000">BT3 607.0</text>
</svg>
<div class="tbar" style="top:397.3px"></div>
<svg style="left:0;top:397.3px" width="300" height="36" viewBox="210 496.3 300 36">
<g transform="translate(0,0.60)" fill="#000" stroke="none">
<path d="M219.6 516.3 L228.9 508.4 L238.5 516.3" fill="none" stroke="#000" stroke-width="1.7" stroke-linecap="round" stroke-linejoin="miter"/>
<path d="M233.4 508 H236.1 V513.4 L233.4 511.2 Z"/>
<path d="M228.9 511.2 L236.1 517.2 V523 Q236.1 523.9 235.2 523.9 H230.9 V519.6 H227 V523.9 H222.8 Q221.9 523.9 221.9 523 V517.2 Z"/>
<path d="M268 506.9 L260.3 514.6 L268 522.3 M260.6 514.6 H274.8" fill="none" stroke="#000" stroke-width="4.3" stroke-linecap="round" stroke-linejoin="round"/>
<path d="M304 506.9 L311.7 514.6 L304 522.3 M311.4 514.6 H297.2" fill="none" stroke="#000" stroke-width="4.3" stroke-linecap="round" stroke-linejoin="round"/>
<rect x="324.1" y="497.5" width="1" height="34" fill="#cfcdc9"/>
<path d="M345.1 506.40000000000003V522.8000000000001M336.90000000000003 514.6H353.3" fill="none" stroke="#000" stroke-width="3"/>
<path d="M345.1 503.0l4.4 4.6h-8.8zM345.1 526.2l4.4 -4.6h-8.8zM333.70000000000005 514.6l4.6 -4.4v8.8zM356.5 514.6l-4.6 -4.4v8.8z" stroke="#000" stroke-width="0.8" stroke-linejoin="round"/>
<circle cx="381.5" cy="512.9" r="7.2" fill="none" stroke="#000" stroke-width="3.4"/>
<path d="M386.9 518.6 L392.3 523.7" fill="none" stroke="#000" stroke-width="3.6" stroke-linecap="round"/>
<path d="M411.4 508.4H430.6M411.4 514.9H430.6M411.4 521.5H430.6" fill="none" stroke="#000" stroke-width="1.5" stroke-linecap="round"/>
<rect x="415" y="506.2" width="4.3" height="4.5" rx="0.8"/><rect x="423" y="512.7" width="4.3" height="4.5" rx="0.8"/><rect x="416.6" y="519.3" width="4.3" height="4.5" rx="0.8"/>
<rect x="440.1" y="497.5" width="1" height="34" fill="#cfcdc9"/>
<path d="M452 506.6 Q452 505.7 452.9 505.7 H465.3 L469.8 510.2 V522.1 Q469.8 523 468.9 523 H452.9 Q452 523 452 522.1 Z" fill="none" stroke="#000" stroke-width="1.7" stroke-linejoin="round"/>
<path d="M454.6 505.7 H463.6 V511.6 Q463.6 512.5 462.7 512.5 H455.5 Q454.6 512.5 454.6 511.6 Z M459.8 506.8 V510.8 H462.3 V506.8 Z" fill-rule="evenodd"/>
<path d="M455.6 523 V517.4 H466.4 V523" fill="none" stroke="#000" stroke-width="1.5" stroke-linejoin="round"/>
</g></svg>
<div class="hline" style="top:433px"></div>
<div class="canvas" style="top:435px;height:396px"></div>
<svg style="left:0;top:435px" width="1695" height="396" viewBox="210 534 1695 396" font-family="Liberation Sans, sans-serif">
<defs><clipPath id="clip534"><rect x="421.875" y="581.52" width="1313.625" height="304.92"/></clipPath></defs>
<path d="M421.88 581.52V886.44M684.60 581.52V886.44M947.33 581.52V886.44M1210.05 581.52V886.44M1472.78 581.52V886.44M1735.50 581.52V886.44M421.875 821.50H1735.5M421.875 747.50H1735.5M421.875 673.50H1735.5M421.875 599.50H1735.5" stroke="#b0b0b0" stroke-width="1.09" fill="none"/>
<g clip-path="url(#clip534)"><path d="M422.2 673.2L422.5 780.2L424.0 763.2L425.5 828.1L426.6 836.6L427.4 826.0L428.6 820.4L429.3 836.0L430.0 849.8L430.6 829.0L431.2 849.8L431.8 828.0L432.3 849.8L432.9 838.0L433.6 872.2L434.2 838.0L434.6 849.8L435.2 828.0L435.9 849.8L436.4 828.0L437.0 820.4L437.8 830.0L438.5 836.6L439.4 803.4L440.4 616.0L441.6 801.9L443.1 814.2L444.4 872.2L447.5 872.2L448.2 849.8L449.3 849.8L450.1 595.3L450.7 597.0L451.2 603.6L452.2 603.0L453.2 602.8L454.2 603.1L455.2 603.6L456.1 603.8L457.1 604.0L458.1 604.4L459.1 605.1L460.1 605.0L461.1 605.2L462.1 605.7L463.0 605.8L464.0 606.5L465.0 606.5L466.0 606.1L467.0 606.6L468.0 607.3L468.9 607.5L469.9 607.5L470.9 607.8L471.9 607.8L472.9 608.1L473.9 608.6L474.9 608.9L475.8 609.2L476.8 609.4L477.8 609.6L478.8 609.9L479.8 610.3L480.8 610.7L481.8 610.8L482.7 611.2L483.7 611.5L484.7 611.7L485.7 611.7L486.7 612.1L487.7 612.4L488.6 612.6L489.6 613.4L490.6 613.1L491.6 612.9L492.6 613.4L493.6 614.1L494.6 614.4L495.5 614.8L496.5 615.0L497.5 614.2L498.5 614.2L499.5 615.2L500.5 614.6L501.5 615.8L502.4 615.7L503.4 616.7L504.4 616.5L505.4 617.1L506.4 617.4L507.4 617.2L508.3 617.3L509.3 618.3L510.3 618.3L511.3 618.4L512.3 619.5L513.3 619.9L514.3 619.8L515.2 619.8L516.2 620.0L517.2 620.6L518.2 620.7L519.2 620.8L520.2 621.4L521.2 621.6L522.1 621.8L523.1 623.0L524.1 623.0L525.1 623.6L526.1 624.4L527.1 624.1L528.0 624.7L529.0 624.8L530.0 624.5L531.0 625.4L532.0 625.8L533.0 626.1L534.0 626.5L534.9 627.4L535.9 627.9L536.9 626.7L537.9 627.9L538.9 627.8L539.9 628.1L540.9 628.2L541.8 629.7L542.8 630.1L543.8 630.2L544.8 630.3L545.8 630.6L546.8 630.8L547.7 631.5L548.7 631.4L549.7 631.5L550.7 631.2L551.7 632.0L552.7 632.5L553.7 632.1L554.6 633.1L555.6 633.5L556.6 635.2L557.6 634.3L558.6 634.7L559.6 635.7L560.6 635.8L561.5 635.7L562.5 636.7L563.5 636.1L564.5 637.3L565.5 636.9L566.5 636.9L567.4 637.2L568.4 638.5L569.4 638.2L570.4 638.5L571.4 637.4L572.4 638.2L573.4 638.3L574.3 639.9L575.3 639.9L576.3 641.7L577.3 640.3L578.3 640.4L579.3 639.6L580.3 640.3L581.2 641.8L582.2 641.8L583.2 640.8L584.2 642.1L585.2 643.2L586.2 643.2L587.1 643.9L588.1 643.5L589.1 643.3L590.1 644.5L591.1 644.5L592.1 643.4L593.1 644.9L594.0 646.4L595.0 645.9L596.0 645.4L597.0 646.5L598.0 646.7L599.0 647.4L600.0 647.3L600.9 646.7L601.9 648.5L602.9 648.1L603.9 649.5L604.9 648.8L605.9 648.3L606.8 648.8L607.8 648.6L608.8 650.8L609.8 651.3L610.8 649.0L611.8 649.9L612.8 650.4L613.7 649.9L614.7 650.6L615.7 651.3L616.7 650.8L617.7 651.2L618.7 652.4L619.7 653.0L620.6 654.1L621.6 653.3L622.6 651.2L623.6 653.2L624.6 655.3L625.6 654.8L626.5 655.1L627.5 656.0L628.5 653.9L629.5 654.1L630.5 654.4L631.5 652.2L632.5 653.3L633.4 652.4L634.4 653.0L635.4 653.1L636.4 653.1L637.4 654.1L638.4 655.9L639.4 655.1L640.3 655.6L641.3 655.1L642.3 655.5L643.3 654.8L644.3 657.0L645.3 655.9L646.2 655.1L647.2 656.9L648.2 657.6L649.2 658.5L650.2 656.2L651.2 658.6L652.2 660.3L653.1 658.1L654.1 657.4L655.1 656.7L656.1 655.6L657.1 657.6L658.1 657.9L659.1 659.0L660.0 658.2L661.0 657.8L662.0 658.5L663.0 661.7L664.0 662.0L665.0 662.5L665.9 660.6L666.9 663.1L667.9 662.2L668.9 663.1L669.9 660.6L670.9 660.4L671.9 661.4L672.8 660.1L673.8 661.7L674.8 661.5L675.8 662.8L676.8 663.1L677.8 664.4L678.8 661.7L679.7 661.5L680.7 661.0L681.7 660.4L682.7 661.3L683.7 659.8L684.7 662.6L685.6 662.4L686.6 663.9L687.6 662.1L688.6 661.9L689.6 662.9L690.6 667.3L691.6 663.3L692.5 662.6L693.5 663.6L694.5 664.3L695.5 663.3L696.5 665.2L697.5 664.7L698.5 665.8L699.4 664.7L700.4 667.4L701.4 666.0L702.4 664.5L703.4 665.8L704.4 668.6L705.3 671.3L706.3 668.4L707.3 669.6L708.3 668.2L709.3 669.2L710.3 667.6L711.3 665.9L712.2 667.7L713.2 668.6L714.2 667.1L715.2 667.5L716.2 668.2L717.2 667.5L718.2 667.5L719.1 667.5L720.1 668.5L721.1 669.4L722.1 671.8L723.1 671.7L724.1 670.9L725.0 669.2L726.0 669.5L727.0 669.2L728.0 670.7L729.0 669.4L730.0 668.5L731.0 669.8L731.9 670.1L732.9 670.3L733.9 669.8L734.9 668.4L735.9 668.7L736.9 670.0L737.9 671.9L738.8 667.9L739.8 668.5L740.8 669.7L741.8 671.8L742.8 672.4L743.8 672.8L744.7 671.8L745.7 670.6L746.7 671.9L747.7 672.1L748.7 671.7L749.7 671.0L750.7 670.0L751.6 669.4L752.6 671.1L753.6 672.0L754.6 671.2L755.6 670.7L756.6 671.7L757.6 672.2L758.5 672.1L759.5 668.8L760.5 669.4L761.5 673.7L762.5 673.3L763.5 678.2L764.4 675.9L765.4 677.8L766.4 677.8L767.4 674.4L768.4 676.6L769.4 671.2L770.4 672.9L771.3 674.6L772.3 675.7L773.3 677.7L774.3 675.9L775.3 675.9L776.3 674.3L777.3 676.6L778.2 676.0L779.2 674.3L780.2 676.0L781.2 674.4L782.2 673.3L783.2 674.2L784.1 674.6L785.1 675.3L786.1 676.2L787.1 674.3L788.1 675.7L789.1 676.6L790.1 676.7L791.0 677.8L792.0 673.9L793.0 673.4L794.0 674.8L795.0 677.8L796.0 676.7L797.0 677.3L797.9 676.3L798.9 678.5L799.9 679.9L800.9 676.5L801.9 675.0L802.9 677.3L803.8 676.7L804.8 679.5L805.8 678.4L806.8 675.3L807.8 677.3L808.8 678.5L809.8 676.8L810.7 679.0L811.7 676.7L812.7 676.3L813.7 677.0L814.7 678.8L815.7 678.0L816.7 677.6L817.6 678.9L818.6 680.7L819.6 677.6L820.6 680.3L821.6 679.5L822.6 678.4L823.5 678.8L824.5 678.3L825.5 681.2L826.5 680.7L827.5 675.3L828.5 677.8L829.5 675.4L830.4 674.0L831.4 676.4L832.4 679.1L833.4 675.4L834.4 677.3L835.4 677.9L836.4 678.2L837.3 676.6L838.3 679.2L839.3 677.2L840.3 677.6L841.3 678.3L842.3 678.8L843.2 679.2L844.2 680.3L845.2 681.0L846.2 682.1L847.2 681.4L848.2 682.7L849.2 680.8L850.1 679.3L851.1 677.9L852.1 677.9L853.1 678.3L854.1 679.7L855.1 677.8L856.1 679.6L857.0 682.6L858.0 682.0L859.0 682.7L860.0 682.1L861.0 680.8L862.0 679.5L862.9 682.8L863.9 683.0L864.9 682.1L865.9 681.0L866.9 680.4L867.9 677.2L868.9 682.0L869.8 682.3L870.8 683.4L871.8 682.1L872.8 681.6L873.8 681.3L874.8 680.7L875.8 677.4L876.7 678.4L877.7 678.9L878.7 682.3L879.7 682.9L880.7 680.3L881.7 681.1L882.6 680.5L883.6 678.3L884.6 681.7L885.6 679.6L886.6 680.8L887.6 678.6L888.6 676.8L889.5 679.9L890.5 682.4L891.5 684.8L892.5 680.9L893.5 683.1L894.5 684.3L895.5 682.4L896.4 681.6L897.4 682.6L898.4 681.3L899.4 678.4L900.4 678.7L901.4 678.6L902.3 680.9L903.3 680.4L904.3 684.3L905.3 685.8L906.3 686.1L907.3 682.7L908.3 681.8L909.2 680.6L910.2 682.2L911.2 680.6L912.2 681.0L913.2 681.3L914.2 685.2L915.2 681.9L916.1 679.6L917.1 682.1L918.1 682.2L919.1 681.5L920.1 686.0L921.1 680.3L922.0 681.1L923.0 680.9L924.0 680.9L925.0 682.2L926.0 684.3L927.0 681.1L928.0 682.2L928.9 682.8L929.9 683.5L930.9 684.6L931.9 681.5L932.9 681.9L933.9 681.7L934.9 683.9L935.8 681.6L936.8 684.2L937.8 683.1L938.8 682.5L939.8 682.5L940.8 682.3L941.7 682.4L942.7 683.3L943.7 683.5L944.7 685.5L945.7 685.9L946.7 684.7L947.7 683.2L948.6 680.9L949.6 683.1L950.6 684.2L951.6 683.9L952.6 687.1L953.6 686.4L954.6 686.5L955.5 687.9L956.5 687.8L957.5 688.6L958.5 686.3L959.5 685.5L960.5 685.9L961.4 684.6L962.4 687.0L963.4 687.9L964.4 684.8L965.4 684.1L966.4 684.4L967.4 682.6L968.3 680.9L969.3 682.4L970.3 684.8L971.3 687.6L972.3 679.0L973.3 675.5L974.3 682.5L975.2 684.5L976.2 685.8L977.2 687.6L978.2 687.8L979.2 685.2L980.2 683.0L981.1 686.5L982.1 683.1L983.1 682.0L984.1 686.3L985.1 681.6L986.1 688.1L987.1 685.3L988.0 686.1L989.0 684.4L990.0 685.3L991.0 684.4L992.0 684.9L993.0 684.9L994.0 685.5L994.9 684.7L995.9 683.8L996.9 685.4L997.9 684.5L998.9 684.0L999.9 686.6L1000.8 685.8L1001.8 684.1L1002.8 682.4L1003.8 686.8L1004.8 688.3L1005.8 687.4L1006.8 684.0L1007.7 685.6L1008.7 686.8L1009.7 684.4L1010.7 685.9L1011.7 687.7L1012.7 683.7L1013.7 683.0L1014.6 683.0L1015.6 681.3L1016.6 684.0L1017.6 683.4L1018.6 686.7L1019.6 684.1L1020.5 681.8L1021.5 682.5L1022.5 687.9L1023.5 687.2L1024.5 689.8L1025.5 688.9L1026.5 687.7L1027.4 686.9L1028.4 688.2L1029.4 685.3L1030.4 686.4L1031.4 685.9L1032.4 686.1L1033.4 687.2L1034.3 688.0L1035.3 685.6L1036.3 685.2L1037.3 688.9L1038.3 684.5L1039.3 684.2L1040.2 687.9L1041.2 688.4L1042.2 689.5L1043.2 686.5L1044.2 685.3L1045.2 684.3L1046.2 684.7L1047.1 686.2L1048.1 684.8L1049.1 686.3L1050.1 686.0L1051.1 687.6L1052.1 685.5L1053.1 683.6L1054.0 681.5L1055.0 686.4L1056.0 683.7L1057.0 685.6L1058.0 684.4L1059.0 687.3L1059.9 685.4L1060.9 686.9L1061.9 687.2L1062.9 685.6L1063.9 685.3L1064.9 685.3L1065.9 684.7L1066.8 688.1L1067.8 687.5L1068.8 687.6L1069.8 685.9L1070.8 686.5L1071.8 688.2L1072.8 687.2L1073.7 686.4L1074.7 684.9L1075.7 683.6L1076.7 684.2L1077.7 685.9L1078.7 686.5L1079.6 683.8L1080.6 685.1L1081.6 692.0L1082.6 689.0L1083.6 687.6L1084.6 688.4L1085.6 685.5L1086.5 685.7L1087.5 688.0L1088.5 684.7L1089.5 685.0L1090.5 686.4L1091.5 685.8L1092.5 686.9L1093.4 685.1L1094.4 687.2L1095.4 685.3L1096.4 687.7L1097.4 685.3L1098.4 687.3L1099.3 686.2L1100.3 688.1L1101.3 688.9L1102.3 691.0L1103.3 690.8L1104.3 689.7L1105.3 687.9L1106.2 687.5L1107.2 687.1L1108.2 686.9L1109.2 687.8L1110.2 692.6L1111.2 686.2L1112.1 687.0L1113.1 686.9L1114.1 686.2L1115.1 683.5L1116.1 684.9L1117.1 684.8L1118.1 689.2L1119.0 687.3L1120.0 689.5L1121.0 685.3L1122.0 687.9L1123.0 689.0L1124.0 686.5L1125.0 683.5L1125.9 685.1L1126.9 686.4L1127.9 688.4L1128.9 688.6L1129.9 686.4L1130.9 686.3L1131.8 689.0L1132.8 688.6L1133.8 687.4L1134.8 687.7L1135.8 688.8L1136.8 686.5L1137.8 689.8L1138.7 687.6L1139.7 689.3L1140.7 688.7L1141.7 685.2L1142.7 687.4L1143.7 686.8L1144.7 687.3L1145.6 687.7L1146.6 684.8L1147.6 682.9L1148.6 684.8L1149.6 687.2L1150.6 685.8L1151.5 686.8L1152.5 686.9L1153.5 685.8L1154.5 686.7L1155.5 688.4L1156.5 687.7L1157.5 687.6L1158.4 689.5L1159.4 688.4L1160.4 686.6L1161.4 684.0L1162.4 689.6L1163.4 689.0L1164.4 687.1L1165.3 690.0L1166.3 687.1L1167.3 686.0L1168.3 686.8L1169.3 688.4L1170.3 688.0L1171.2 689.8L1172.2 687.8L1173.2 692.4L1174.2 689.9L1175.2 689.3L1176.2 687.6L1177.2 690.6L1178.1 690.6L1179.1 688.6L1180.1 688.4L1181.1 690.3L1182.1 689.3L1183.1 688.2L1184.1 692.4L1185.0 686.2L1186.0 686.0L1187.0 686.6L1188.0 686.3L1189.0 684.8L1190.0 689.2L1190.9 687.4L1191.9 688.9L1192.9 686.1L1193.9 689.2L1194.9 688.2L1195.9 690.2L1196.9 688.9L1197.8 686.2L1198.8 685.6L1199.8 690.3L1200.8 688.4L1201.8 689.0L1202.8 689.7L1203.8 688.5L1204.7 685.8L1205.7 686.3L1206.7 687.7L1207.7 688.0L1208.7 689.1L1209.7 689.2L1210.6 685.0L1211.6 685.8L1212.6 687.9L1213.6 690.4L1214.6 686.3L1215.6 685.9L1216.6 689.6L1217.5 691.5L1218.5 691.0L1219.5 688.6L1220.5 689.7L1221.5 688.6L1222.5 690.9L1223.5 687.7L1224.4 688.8L1225.4 689.0L1226.4 689.9L1227.4 690.0L1228.4 690.8L1229.4 692.1L1230.3 689.6L1231.3 688.7L1232.3 690.7L1233.3 687.0L1234.3 685.9L1235.3 688.2L1236.3 690.2L1237.2 685.5L1238.2 688.8L1239.2 688.8L1240.2 687.2L1241.2 688.5L1242.2 689.3L1243.2 693.0L1244.1 694.6L1245.1 689.3L1246.1 689.1L1247.1 687.6L1248.1 684.0L1249.1 687.3L1250.0 692.7L1251.0 686.0L1252.0 690.1L1253.0 688.9L1254.0 693.7L1255.0 692.9L1256.0 687.8L1256.9 687.7L1257.9 690.4L1258.9 687.3L1259.9 690.7L1260.9 691.6L1261.9 692.3L1262.9 692.7L1263.8 691.0L1264.8 689.7L1265.8 692.1L1266.8 690.9L1267.8 694.1L1268.8 690.7L1269.7 688.4L1270.7 688.0L1271.7 686.6L1272.7 687.0L1273.7 689.4L1274.7 688.3L1275.7 691.2L1276.6 690.7L1277.6 689.6L1278.6 689.5L1279.6 688.7L1280.6 687.6L1281.6 690.8L1282.6 691.2L1283.5 691.0L1284.5 691.3L1285.5 689.2L1286.5 688.2L1287.5 688.7L1288.5 690.0L1289.4 691.6L1290.4 690.1L1291.4 688.9L1292.4 690.4L1293.4 690.8L1294.4 692.3L1295.4 690.7L1296.3 688.9L1297.3 692.1L1298.3 690.5L1299.3 688.7L1300.3 689.0L1301.3 687.0L1302.3 689.5L1303.2 688.7L1304.2 693.1L1305.2 693.6L1306.2 693.6L1307.2 688.3L1308.2 688.4L1309.1 691.6L1310.1 690.7L1311.1 690.1L1312.1 690.2L1313.1 689.1L1314.1 690.3L1315.1 696.0L1316.0 694.1L1317.0 694.0L1318.0 689.5L1319.0 692.8L1320.0 691.7L1321.0 690.7L1322.0 694.6L1322.9 694.0L1323.9 690.5L1324.9 690.6L1325.9 691.9L1326.9 690.5L1327.9 691.9L1328.8 690.6L1329.8 688.9L1330.8 689.8L1331.8 689.9L1332.8 687.7L1333.8 690.4L1334.8 689.9L1335.7 691.2L1336.7 692.1L1337.7 690.7L1338.7 692.5L1339.7 697.9L1340.7 689.2L1341.7 692.0L1342.6 694.1L1343.6 693.1L1344.6 694.6L1345.6 693.1L1346.6 690.2L1347.6 691.5L1348.5 689.9L1349.5 690.9L1350.5 689.5L1351.5 691.4L1352.5 690.2L1353.5 692.6L1354.5 692.7L1355.4 693.2L1356.4 691.9L1357.4 691.5L1358.4 691.5L1359.4 688.3L1360.4 690.9L1361.4 691.7L1362.3 689.6L1363.3 691.6L1364.3 693.2L1365.3 690.3L1366.3 688.8L1367.3 689.9L1368.2 688.4L1369.2 689.7L1370.2 686.3L1371.2 693.3L1372.2 690.8L1373.2 691.1L1374.2 691.1L1375.1 692.8L1376.1 691.0L1377.1 690.0L1378.1 688.0L1379.1 689.1L1380.1 687.9L1381.1 690.5L1382.0 688.6L1383.0 691.3L1384.0 689.0L1385.0 691.5L1386.0 689.5L1387.0 687.9L1387.9 690.7L1388.9 692.5L1389.9 689.8L1390.9 691.1L1391.9 692.1L1392.9 693.1L1393.9 688.6L1394.8 687.7L1395.8 691.1L1396.8 693.0L1397.8 689.4L1398.8 693.0L1399.8 691.7L1400.8 686.5L1401.7 688.3L1402.7 689.6L1403.7 689.9L1404.7 692.2L1405.7 692.0L1406.7 691.7L1407.6 692.7L1408.6 691.6L1409.6 690.2L1410.6 692.3L1411.6 691.0L1412.6 691.6L1413.6 693.6L1414.5 688.6L1415.5 689.8L1416.5 692.8L1417.5 690.4L1418.5 690.2L1419.5 691.6L1420.5 689.0L1421.4 691.9L1422.4 691.4L1423.4 692.3L1424.4 690.5L1425.4 690.3L1426.4 687.7L1427.3 689.7L1428.3 687.4L1429.3 689.3L1430.3 686.8L1431.3 688.6L1432.3 687.9L1433.3 689.8L1434.2 689.5L1435.2 691.8L1436.2 692.2L1437.2 688.4L1438.2 693.6L1439.2 694.8L1440.2 697.2L1441.1 690.6L1442.1 687.9L1443.1 688.5L1444.1 689.4L1445.1 688.7L1446.1 690.4L1447.0 689.4L1448.0 688.7L1449.0 690.3L1450.0 689.5L1451.0 690.9L1452.0 690.2L1453.0 689.7L1453.9 693.1L1454.9 690.9L1455.9 690.5L1456.9 690.6L1457.9 692.5L1458.9 692.4L1459.9 692.3L1460.8 691.6L1461.8 690.3L1462.8 692.3L1463.8 692.3L1464.8 692.9L1465.8 690.7L1466.7 690.0L1467.7 686.7L1468.7 690.0L1469.7 689.5L1470.7 687.8L1471.7 688.8L1472.7 687.9L1473.6 689.5L1474.6 690.0L1475.6 690.0L1476.6 689.2L1477.6 690.4L1478.6 690.3L1479.6 691.4L1480.5 691.2L1481.5 691.1L1482.5 691.1L1483.5 691.3L1484.5 694.2L1485.5 692.6L1486.4 691.4L1487.4 688.4L1488.4 688.6L1489.4 691.7L1490.4 689.3L1491.4 692.3L1492.4 690.0L1493.3 690.8L1494.3 692.6L1495.3 694.1L1496.3 694.0L1497.3 692.7L1498.3 691.8L1499.3 691.3L1500.2 689.2L1501.2 692.5L1502.2 695.4L1503.2 688.6L1504.2 691.2L1505.2 692.0L1506.1 692.6L1507.1 690.8L1508.1 689.9L1509.1 692.3L1510.1 692.3L1511.1 693.7L1512.1 689.7L1513.0 690.6L1514.0 688.7L1515.0 688.5L1516.0 692.4L1517.0 693.5L1518.0 690.4L1519.0 692.1L1519.9 691.1L1520.9 694.0L1521.9 694.2L1522.9 693.8L1523.9 691.9L1524.9 694.0L1525.8 688.9L1526.8 689.6L1527.8 691.7L1528.8 693.2L1529.8 691.3L1530.8 692.4L1531.8 691.4L1532.7 692.9L1533.7 690.3L1534.7 690.1L1535.7 689.8L1536.7 687.4L1537.7 688.6L1538.7 689.8L1539.6 688.4L1540.6 688.7L1541.6 689.7L1542.6 692.2L1543.6 691.6L1544.6 690.4L1545.5 688.4L1546.5 689.2L1547.5 693.6L1548.5 691.1L1549.5 690.9L1550.5 691.1L1551.5 689.7L1552.4 692.3L1553.4 691.0L1554.4 694.7L1555.4 692.6L1556.4 693.6L1557.4 693.9L1558.4 691.9L1559.3 691.7L1560.3 692.1L1561.3 690.3L1562.3 690.1L1563.3 692.1L1564.3 688.0L1565.2 689.0L1566.2 688.1L1567.2 689.2L1568.2 689.4L1569.2 693.9L1570.2 692.6L1571.2 692.0L1572.1 693.6L1573.1 692.7L1574.1 688.8L1575.1 692.4L1576.1 693.0L1577.1 695.2L1578.1 693.0L1579.0 689.8L1580.0 692.5L1581.0 692.3L1582.0 693.2L1583.0 693.2L1584.0 690.4L1584.9 692.2L1585.9 694.8L1586.9 693.0L1587.9 688.6L1588.9 689.4L1589.9 689.6L1590.9 690.9L1591.8 689.0L1592.8 692.5L1593.8 688.0L1594.8 690.1L1595.8 692.7L1596.8 698.0L1597.8 694.1L1598.7 694.0L1599.7 689.6L1600.7 692.8L1601.7 693.2L1602.7 691.9L1603.7 692.7L1604.6 692.1L1605.6 689.2L1606.6 690.6L1607.6 692.1L1608.6 691.3L1609.6 692.6L1610.6 689.8L1611.5 692.0L1612.5 690.8L1613.5 691.2L1614.5 692.3L1615.5 690.6L1616.5 690.4L1617.5 690.2L1618.4 691.0L1619.4 692.5L1620.4 690.9L1621.4 690.2L1622.4 690.4L1623.4 690.1L1624.3 690.9L1625.3 689.2L1626.3 694.1L1627.3 692.2L1628.3 692.9L1629.3 692.0L1630.3 690.0L1631.2 688.2L1632.2 690.2L1633.2 693.9L1634.2 690.7L1635.2 692.1L1636.2 694.3L1637.2 691.8L1638.1 692.4L1639.1 688.5L1640.1 687.1L1641.1 690.4L1642.1 691.9L1643.1 691.2L1644.0 689.1L1645.0 689.3L1646.0 692.1L1647.0 689.8L1648.0 690.8L1649.0 690.7L1650.0 690.9L1650.9 691.0L1651.9 694.8L1652.9 692.9L1653.9 693.1L1654.9 689.3L1655.9 692.6L1656.9 691.3L1657.8 692.7L1658.8 692.5L1659.8 690.2L1660.8 692.6L1661.8 691.9L1662.8 691.5L1663.7 692.8L1664.7 695.1L1665.7 693.7L1666.7 690.1L1667.7 692.4L1668.7 693.0L1669.7 687.3L1670.6 689.5L1671.6 691.4L1672.6 689.3L1673.6 687.8L1674.6 685.2L1675.6 687.6L1676.6 692.8L1677.5 692.4L1678.5 693.3L1679.5 688.2L1680.5 689.5L1681.5 690.1L1682.5 690.3L1683.4 693.1L1684.4 693.2L1685.4 689.7L1686.4 690.6L1687.4 694.6L1688.4 691.2L1689.4 692.5L1690.3 689.9L1691.3 690.4L1692.3 691.0L1693.3 691.6L1694.3 691.8L1695.3 695.0L1696.3 692.9L1697.2 691.0L1698.2 691.1L1699.2 695.1L1700.2 690.0L1701.2 692.8L1702.2 688.7L1703.1 688.6L1704.1 689.0L1705.1 689.5L1706.1 690.1L1707.1 693.6L1708.1 690.4L1709.1 689.7L1710.0 688.5L1711.0 689.2L1712.0 688.9L1713.0 689.7L1714.0 690.7L1715.0 692.1L1716.0 689.0L1716.9 690.3L1717.9 688.7L1718.9 691.4L1719.9 694.6L1720.9 693.9L1721.9 694.7L1722.8 691.0L1723.8 692.0L1724.8 692.8L1725.8 692.0L1726.8 688.7L1727.8 690.6L1728.8 690.5L1729.7 692.1L1730.7 694.3L1731.7 694.2L1732.7 693.1L1733.7 693.7L1734.7 691.5L1735.7 694.9" fill="none" stroke="#1f77b4" stroke-width="2.04" stroke-linejoin="round"/></g>
<path d="M421.88 886.44v4.8M684.60 886.44v4.8M947.33 886.44v4.8M1210.05 886.44v4.8M1472.78 886.44v4.8M1735.50 886.44v4.8M421.875 821.50h-4.8M421.875 747.50h-4.8M421.875 673.50h-4.8M421.875 599.50h-4.8" stroke="#000" stroke-width="1.09" fill="none"/>
<path d="M421.875 873.22h-2.7M421.875 860.19h-2.7M421.875 850.95h-2.7M421.875 843.78h-2.7M421.875 837.92h-2.7M421.875 832.96h-2.7M421.875 828.67h-2.7M421.875 824.89h-2.7M421.875 799.22h-2.7M421.875 786.19h-2.7M421.875 776.95h-2.7M421.875 769.78h-2.7M421.875 763.92h-2.7M421.875 758.96h-2.7M421.875 754.67h-2.7M421.875 750.89h-2.7M421.875 725.22h-2.7M421.875 712.19h-2.7M421.875 702.95h-2.7M421.875 695.78h-2.7M421.875 689.92h-2.7M421.875 684.96h-2.7M421.875 680.67h-2.7M421.875 676.89h-2.7M421.875 651.22h-2.7M421.875 638.19h-2.7M421.875 628.95h-2.7M421.875 621.78h-2.7M421.875 615.92h-2.7M421.875 610.96h-2.7M421.875 606.67h-2.7M421.875 602.89h-2.7" stroke="#000" stroke-width="0.82" fill="none"/>

<rect x="421.875" y="581.52" width="1313.625" height="304.92" fill="none" stroke="#000" stroke-width="1.09"/>
<text transform="translate(417.68,907.14) scale(1.1728,1)" font-size="14.4" fill="#000">0</text>
<text transform="translate(667.74,907.14) scale(1.1250,1)" font-size="14.4" fill="#000">2000</text>
<text transform="translate(930.91,907.14) scale(1.1108,1)" font-size="14.4" fill="#000">4000</text>
<text transform="translate(1193.18,907.14) scale(1.1253,1)" font-size="14.4" fill="#000">6000</text>
<text transform="translate(1456.03,907.14) scale(1.1214,1)" font-size="14.4" fill="#000">8000</text>
<text transform="translate(1713.88,907.14) scale(1.1271,1)" font-size="14.4" fill="#000">10000</text>
<text transform="translate(397.03,821.20) scale(1.2127,1)" font-size="10.1" fill="#000">−1</text>
<text transform="translate(378.29,826.00) scale(1.1354,1)" font-size="14.4" fill="#000">10</text>
<text transform="translate(405.24,747.20) scale(0.9880,1)" font-size="10.1" fill="#000">0</text>
<text transform="translate(386.28,752.00) scale(1.1354,1)" font-size="14.4" fill="#000">10</text>
<text transform="translate(404.79,673.20) scale(1.0954,1)" font-size="10.1" fill="#000">1</text>
<text transform="translate(386.28,678.00) scale(1.1354,1)" font-size="14.4" fill="#000">10</text>
<text transform="translate(405.10,599.20) scale(1.0367,1)" font-size="10.1" fill="#000">2</text>
<text transform="translate(386.28,604.00) scale(1.1354,1)" font-size="14.4" fill="#000">10</text>
<text transform="translate(1072.52,927.14) scale(1.2191,1)" font-size="14.4" fill="#000">m</text>
<text transform="translate(370.9,748.08) rotate(-90) scale(1.0002,1)" font-size="14.4" fill="#000">MHz</text>
<text transform="translate(980.61,572.82) scale(1.0883,1)" font-size="20.1" fill="#000">Photo-counting data</text>
<rect x="1607.5" y="588.42" width="120.90" height="25.00" rx="2.6" fill="#fff" fill-opacity="0.8" stroke="#cccccc" stroke-opacity="0.85" stroke-width="1.09"/>
<path d="M1612.40 600.12h29.6" stroke="#1f77b4" stroke-width="2.04" fill="none"/>
<text transform="translate(1651.23,604.82) scale(1.0784,1)" font-size="14.4" fill="#000">BC3 607.0</text>
</svg>
<div class="tbar" style="top:831px;height:40px"></div>
<svg style="left:0;top:831.3px" width="300" height="36" viewBox="210 930.3 300 36">
<g transform="translate(0,434.60)" fill="#000" stroke="none">
<path d="M219.6 516.3 L228.9 508.4 L238.5 516.3" fill="none" stroke="#000" stroke-width="1.7" stroke-linecap="round" stroke-linejoin="miter"/>
<path d="M233.4 508 H236.1 V513.4 L233.4 511.2 Z"/>
<path d="M228.9 511.2 L236.1 517.2 V523 Q236.1 523.9 235.2 523.9 H230.9 V519.6 H227 V523.9 H222.8 Q221.9 523.9 221.9 523 V517.2 Z"/>
<path d="M268 506.9 L260.3 514.6 L268 522.3 M260.6 514.6 H274.8" fill="none" stroke="#000" stroke-width="4.3" stroke-linecap="round" stroke-linejoin="round"/>
<path d="M304 506.9 L311.7 514.6 L304 522.3 M311.4 514.6 H297.2" fill="none" stroke="#000" stroke-width="4.3" stroke-linecap="round" stroke-linejoin="round"/>
<rect x="324.1" y="497.5" width="1" height="34" fill="#cfcdc9"/>
<path d="M345.1 506.40000000000003V522.8000000000001M336.90000000000003 514.6H353.3" fill="none" stroke="#000" stroke-width="3"/>
<path d="M345.1 503.0l4.4 4.6h-8.8zM345.1 526.2l4.4 -4.6h-8.8zM333.70000000000005 514.6l4.6 -4.4v8.8zM356.5 514.6l-4.6 -4.4v8.8z" stroke="#000" stroke-width="0.8" stroke-linejoin="round"/>
<circle cx="381.5" cy="512.9" r="7.2" fill="none" stroke="#000" stroke-width="3.4"/>
<path d="M386.9 518.6 L392.3 523.7" fill="none" stroke="#000" stroke-width="3.6" stroke-linecap="round"/>
<path d="M411.4 508.4H430.6M411.4 514.9H430.6M411.4 521.5H430.6" fill="none" stroke="#000" stroke-width="1.5" stroke-linecap="round"/>
<rect x="415" y="506.2" width="4.3" height="4.5" rx="0.8"/><rect x="423" y="512.7" width="4.3" height="4.5" rx="0.8"/><rect x="416.6" y="519.3" width="4.3" height="4.5" rx="0.8"/>
<rect x="440.1" y="497.5" width="1" height="34" fill="#cfcdc9"/>
<path d="M452 506.6 Q452 505.7 452.9 505.7 H465.3 L469.8 510.2 V522.1 Q469.8 523 468.9 523 H452.9 Q452 523 452 522.1 Z" fill="none" stroke="#000" stroke-width="1.7" stroke-linejoin="round"/>
<path d="M454.6 505.7 H463.6 V511.6 Q463.6 512.5 462.7 512.5 H455.5 Q454.6 512.5 454.6 511.6 Z M459.8 506.8 V510.8 H462.3 V506.8 Z" fill-rule="evenodd"/>
<path d="M455.6 523 V517.4 H466.4 V523" fill="none" stroke="#000" stroke-width="1.5" stroke-linejoin="round"/>
</g></svg>
<div class="vline"></div>
<div style="left:1697px;top:819px;width:4px;height:1px;background:#4a4540"></div>
<div style="left:1700px;top:819px;width:1px;height:10px;background:#dd9a5a"></div>
<div style="left:1698px;top:835px;width:3px;height:30px;border:1px solid #c2c0bc;border-right:none;border-radius:3px 0 0 3px"></div>
</div>
</div>
</body></html>
